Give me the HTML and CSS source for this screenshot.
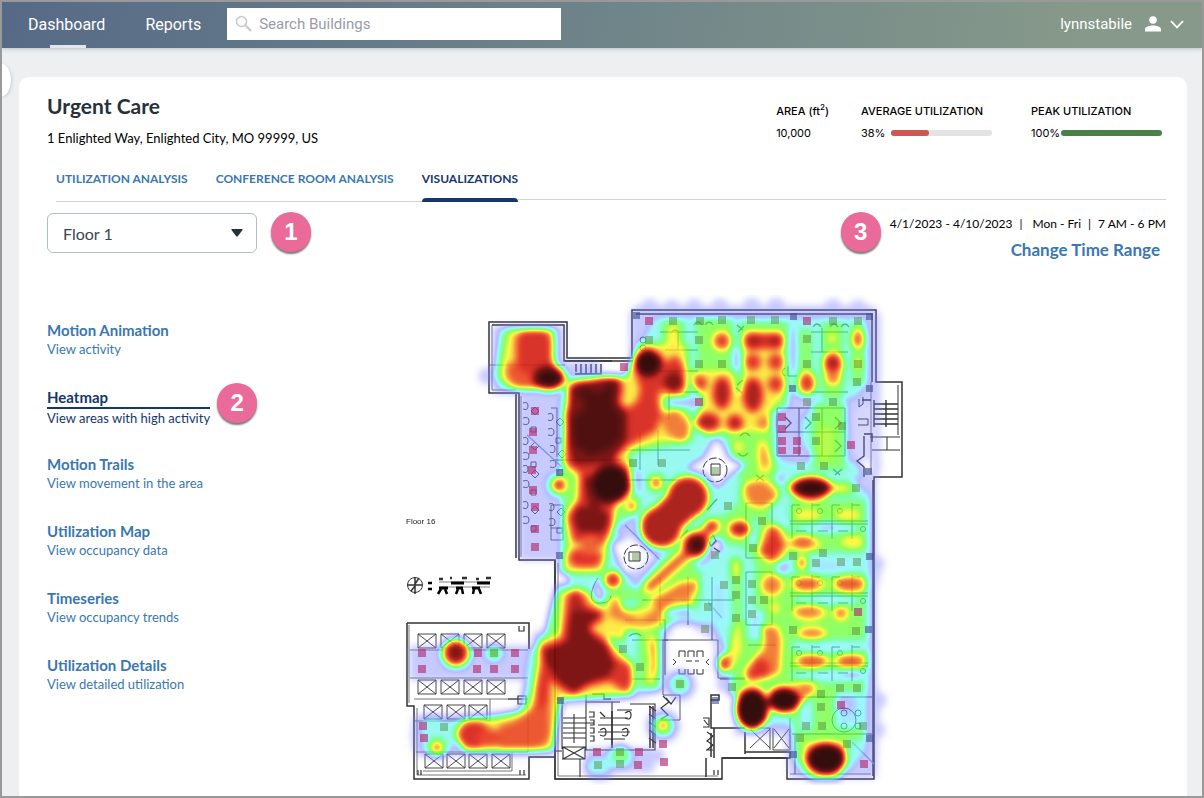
FILE: index.html
```html
<!DOCTYPE html>
<html lang="en">
<head>
<meta charset="utf-8">
<meta name="viewport" content="width=device-width, initial-scale=1">
<title>Urgent Care - Visualizations</title>
<link rel="stylesheet" href="styles.css">
</head>
<body>
<header class="topbar">
  <nav class="topnav" aria-label="Main">
    <a class="topnav-link is-active" href="#dashboard">Dashboard</a>
    <a class="topnav-link" href="#reports">Reports</a>
  </nav>
  <label class="search">
    <svg width="18" height="18" viewBox="0 0 18 18" aria-hidden="true"><circle cx="6.5" cy="6.5" r="5" fill="none" stroke="#c9c9cb" stroke-width="1.6"/><path d="M10.3 10.3 16 16" stroke="#c9c9cb" stroke-width="2"/></svg>
    <input type="search" placeholder="Search Buildings" aria-label="Search Buildings">
  </label>
  <button class="account" type="button">lynnstabile
    <svg class="account-person" width="16" height="16" viewBox="0 0 16 16" aria-hidden="true"><circle cx="8" cy="4" r="3.8" fill="#fff"/><path d="M0 15.500V13C0 10.800 4.500 9.500 8 9.500S16 10.800 16 13V15.500Z" fill="#fff"/></svg>
    <svg width="14" height="9" viewBox="0 0 14 9" aria-hidden="true"><path d="M1 1.200 7 7.400 13 1.200" fill="none" stroke="#fff" stroke-width="1.800"/></svg>
  </button>
</header>
<main class="page">
  <button class="drawer-handle" type="button" aria-label="Open menu"></button>
  <section class="card">
    <div class="card-head">
      <div>
        <h1 class="title">Urgent Care</h1>
        <p class="address">1 Enlighted Way, Enlighted City, MO 99999, US</p>
      </div>
      <dl class="stats">
        <div class="stat"><dt>AREA (ft<sup>2</sup>)</dt><dd>10,000</dd></div>
        <div class="stat"><dt>AVERAGE UTILIZATION</dt><dd><span class="percent">38%</span><span class="bar"><span class="bar-fill bar-low" style="width:38%"></span></span></dd></div>
        <div class="stat"><dt>PEAK UTILIZATION</dt><dd><span class="percent">100%</span><span class="bar"><span class="bar-fill bar-full" style="width:100%"></span></span></dd></div>
      </dl>
    </div>
    <nav class="tabs" aria-label="Building views">
      <a class="tab" href="#utilization">UTILIZATION ANALYSIS</a>
      <a class="tab" href="#conference">CONFERENCE ROOM ANALYSIS</a>
      <a class="tab is-active" href="#visualizations">VISUALIZATIONS</a>
      <span class="tabs-rest"></span>
    </nav>
    <div class="toolbar">
      <div class="floor">
        <select aria-label="Floor"><option>Floor 1</option></select>
        <svg class="floor-arrow" width="12" height="8" viewBox="0 0 12 8" aria-hidden="true"><path d="M1 0H11Q12 0 11.500 1L7 7Q6 8 5 7L.5 1Q0 0 1 0Z" fill="#263238"/></svg>
      </div>
      <span class="marker">1</span>
      <span class="marker marker-range">3</span>
      <div class="range">
        <p class="range-text"><span>4/1/2023 - 4/10/2023</span><span>|</span><span class="range-days">Mon - Fri</span><span>|</span><span>7 AM - 6 PM</span></p>
        <a class="range-link" href="#range">Change Time Range</a>
      </div>
    </div>
    <div class="content">
      <nav class="views" aria-label="Visualizations">
        <a class="view" href="#animation"><strong>Motion Animation</strong><span>View activity</span></a>
        <div class="view-row"><a class="view is-active" href="#heatmap"><strong>Heatmap</strong><span>View areas with high activity</span></a><span class="marker">2</span></div>
        <a class="view" href="#trails"><strong>Motion Trails</strong><span>View movement in the area</span></a>
        <a class="view" href="#map"><strong>Utilization Map</strong><span>View occupancy data</span></a>
        <a class="view" href="#timeseries"><strong>Timeseries</strong><span>View occupancy trends</span></a>
        <a class="view" href="#details"><strong>Utilization Details</strong><span>View detailed utilization</span></a>
      </nav>
      <svg class="map" viewBox="395 295 515 490" role="img" aria-label="Floor heatmap">
        <defs>
          <filter id="heat" filterUnits="userSpaceOnUse" x="395" y="290" width="515" height="500" color-interpolation-filters="sRGB">
            <feGaussianBlur stdDeviation="3.600" result="b"/>
            <feComponentTransfer in="b" result="c">
              <feFuncR type="table" tableValues=".5 .5 .45 .38 .3 .45 1 .95 .9 .5 .18"/>
              <feFuncG type="table" tableValues=".5 .5 .5 .95 1 1 .96 .5 .16 .04 .02"/>
              <feFuncB type="table" tableValues="1 1 1 1 .55 .12 .12 .14 .1 .04 .02"/>
            </feComponentTransfer>
            <feColorMatrix in="b" type="matrix" values="0 0 0 0 0  0 0 0 0 0  0 0 0 0 0  1 0 0 0 0"/>
            <feComponentTransfer result="a"><feFuncA type="table" tableValues="0 .3 .52 .62 .72 .76 .82 .88 .92 .95 .97"/></feComponentTransfer>
            <feComposite in="c" in2="a" operator="in"/>
          </filter>
          <filter id="soft" x="-5%" y="-5%" width="110%" height="110%"><feGaussianBlur stdDeviation=".6"/></filter>
          <g id="lift"><path d="M0 0H18V14H0ZM0 0 18 14M18 0 0 14" fill="none" stroke="#333" stroke-width=".9"/></g>
          <g id="desks" fill="none" stroke="#333" stroke-width="1"><path d="M0 18H78M0 21H78M2 2V36M22 0V36M42 2V36M62 0V36M2 2H10M22 2H30M42 2H50M62 2H70M6 28H16M28 28H38M48 28H58"/><circle cx="9" cy="8" r="2.500"/><circle cx="30" cy="8" r="2.500"/><circle cx="50" cy="8" r="2.500"/><circle cx="73" cy="26" r="2.500"/></g>
          <g id="chairs" fill="none" stroke="#333" stroke-width=".9"><path d="M0 0q5-2 5 3t-5 3M8 8l4-4 4 4-4 4ZM0 15q6-2 6 3t-6 3M8 24h5v5H8Z"/></g>
        </defs>

        <g filter="url(#soft)" fill="none" stroke="#333">
          <g stroke="#333" stroke-width="1.500">
            <path d="M489 322H567V358H632V310H876V382H902V477H874V779H787V758H722V779H555V560H519V393H489Z"/>
            <path d="M492 325H564V361H633M636 314H872V382M873 480V776M516 394V558M407 623H529V649M407 623V706H414V779H529V757H554M555 560V700"/>
          </g>
          <g stroke-width=".8" stroke="#555">
            <path d="M492 325V390H516M521 396V557M871 382V474M409 625V703M417 708V775H526M558 563V776H718M790 774H871M489 365H565M410 650H528M410 678H528M414 699H528M414 721H490V699M416 752H528V706M423 771H512V752"/>
          </g>
          <path stroke-width="1.400" d="M565 361H612M576 364V372M581 364V373M586 364V374M591 364V374M596 364V374M601 364V373M575 374H602M874 404H898M874 409H898M874 414H898M874 419H898M874 424H898M886 400V427M874 400V427M862 400H871M864 434H872V442M864 436V456L857 461 864 467V477"/>
          <path stroke-width="1" d="M870 437H900M887 437V450M872 450H900M898 385V435M859 399v8l4-3v-7M858 419h10v6h-10"/>
          <g stroke-width="1"><circle cx="715" cy="470" r="12" stroke-dasharray="8 2"/><circle cx="636" cy="557" r="12" stroke-dasharray="8 2"/><path d="M711 464h9v11h-9ZM629 552h11v9h-11ZM598 578C589 592 588 605 602 603Q610 603 611 596"/></g>
          <path d="M722 779H555V699H562V749M555 751H562M586 695V750H655V704H630M586 702H620M612 702V745M617 710H632M600 718H628M598 725H630M598 732H630M604 739H625M563 718H586M563 723H594M563 728H586M563 733H586M563 738H586M574 714V743M563 747H585V759H563ZM563 747 585 759M585 747 563 759M562 759H580V777" stroke-width="1.100"/>
          <path d="M612 711V748M650 706V748M653 706V748M592 694H604V699H611M706 758V777M711 697V728H745M714 728V758M711 733V757M745 732V754M745 752H790V758H722M711 695H719V700H711Z" stroke-width="1.500"/>
          <path d="M663 640H718V678H745M663 640V695H680V720H660" stroke-width=".8"/>
          <path d="M750 729L770 748M770 729L750 748M774 729L789 748M789 729L774 748M749 728H770V750M773 728V750H790V718" stroke-width=".9"/>
          <path d="M679 657v-6h6v6M688 657v-6h6v6M697 657v-6h6v6M679 669v5h6v-5M688 669v5h6v-5M697 669v5h6v-5M686 661h6M695 661h4M673 659l3 3-3 3M709 659l-3 3 3 3" stroke-width="1"/>
          <path d="M703 718h6v9h-6M704 720l4 5M663 696l6 6-8 6 7 7-7 4M707 732l6 4-6 5 6 4-6 5M706 750h7M666 698l5 6 5-7" stroke-width="1.200"/>
          <path d="M589 712h5v5h-5M590 720h4v5h-4M590 728h4v5h-4M590 736h4v5h-4M600 712l5 5M600 730q6-4 6 2t-6 3M625 713q6-4 6 2t-6 3M622 730q6-4 6 2t-6 3M649 706l7 5M649 714l7 5M649 722l7 5M649 730l7 5M649 738l7 5" stroke-width="1.200"/>
          <use href="#lift" x="418" y="634"/><use href="#lift" x="441" y="634"/><use href="#lift" x="464" y="634"/><use href="#lift" x="487" y="634"/>
          <use href="#lift" x="418" y="680"/><use href="#lift" x="441" y="680"/><use href="#lift" x="464" y="680"/><use href="#lift" x="487" y="680"/>
          <use href="#lift" x="424" y="705"/><use href="#lift" x="447" y="705"/><use href="#lift" x="469" y="705"/>
          <use href="#lift" x="425" y="754"/><use href="#lift" x="447" y="754"/><use href="#lift" x="469" y="754"/><use href="#lift" x="492" y="754"/>
          <path d="M508 699H522M518 696h8v8h-8ZM519 626v5h5v-5M418 770v5M421 770v5M520 770v5M524 770v5M714 770v5M718 770v5" stroke-width="1.200"/>
          <use href="#chairs" x="523" y="403"/><use href="#chairs" x="523" y="438"/><use href="#chairs" x="523" y="466"/><use href="#chairs" x="523" y="502"/><use href="#chairs" x="548" y="414"/><use href="#chairs" x="550" y="446"/><use href="#chairs" x="549" y="504"/>
          <path d="M551 408H557V457M551 505H563V540H551ZM551 528H563" stroke-width=".8"/>
          <g stroke-width="1">
            <path d="M660 332H698M665 350H698M659 371H698M659 392H698M669 392V420M678 333V350M811 332H848M811 352H848M811 392H848M822 328V352M788 366V376H797M777 408H845V456H777ZM777 432H845M822 408V456M799 408V456M623 450H690M640 433V470M658 430V465M623 480H680M555 460H622M746 503H772V558H746ZM746 572H772V625H746ZM660 577V625M688 577V625M712 577V640M642 600H735M625 620H665V675M632 640H668M632 679H660M720 679H745M748 645H776M792 697H872M792 734H872M795 734V774"/>
            <path d="M629 636q8-5 12 0M671 333q4-6 8 0M813 327q4-6 8 0M830 327q4-6 8 0M841 327q4-6 8 0M694 325q4-6 8 0M705 325q4-6 8 0M785 417l6 6-6 6M805 417l6 6-6 6M835 417l6 6-6 6M835 440l6 6-6 6M680 538l8-8M707 510l10-11M833 469l7 6M842 469l-7 6" stroke-width="1.300"/>
            <path d="M740 436q5-6 10 0M738 453q5 6 10 0M756 475l8 6M764 475l-8 6M737 325l6 5M744 326l-6 6M737 385l6-5M736 388l6 5M785 368q-6 4 0 8M708 540l5-5 3 6-5 5ZM714 548l6 4" stroke-width="1.300"/>
            <circle cx="844" cy="720" r="12"/><circle cx="844" cy="713" r="3"/><circle cx="858" cy="713" r="3"/><circle cx="844" cy="726" r="3"/><circle cx="858" cy="726" r="3"/><circle cx="643" cy="340" r="3"/><circle cx="643" cy="348" r="3"/>
          </g>
          <use href="#desks" x="790" y="503"/><use href="#desks" x="790" y="575"/><use href="#desks" x="790" y="645"/>
          <path d="M625 525 660 560M708 602l14 16M852 742l22 22M527 435l35 32" stroke="#7d9be8" stroke-width="1.200"/>
          <circle cx="415" cy="585" r="7.500"/><path d="M407 585H422M415 577V594M415 584l4-6M415 586l-4 5" stroke-width="1.500"/>
          <path d="M439 579h4M450 578h2M462 578h5M476 579h3M486 578h5" stroke-width="2.500"/>
          <path d="M439 582H490M439 587H490" stroke-width=".6"/><path d="M451 583H464M477 583H490M439 588H448M456 588H463M472 588H480" stroke="#000" stroke-width="3"/>
          <path d="M438 594l3-5M447 594l-2-5M456 594l2-5M463 594l-1-5M473 594l1-5M481 594l-2-5M428 583h4M428 589h4" stroke="#000" stroke-width="2.500"/>
          <text x="406" y="524" class="plan-text">Floor 16</text>
        </g>

        <g filter="url(#heat)" stroke-linejoin="round" stroke-linecap="round">
          <rect x="390" y="285" width="525" height="510" fill="#000"/>
          <g fill="#272727">
            <path d="M493 326H564V362H600V375H630V312L636 306H872L880 315V470L876 480V560L880 575 876 590V680L880 700 876 778H790L785 735H735L735 695 718 690 714 640 690 625 675 625 666 640V690L640 698 556 706V748Q550 758 480 756L416 756Q408 740 414 715L530 712V680H410V646H535L556 634V592L558 560H519V394H493Z"/>
            <circle cx="487" cy="376" r="8"/><circle cx="542" cy="640" r="10"/><circle cx="650" cy="308" r="9"/><circle cx="672" cy="308" r="8"/><circle cx="694" cy="308" r="9"/><circle cx="720" cy="307" r="8"/><circle cx="752" cy="307" r="9"/><circle cx="776" cy="307" r="9"/><circle cx="833" cy="308" r="9"/><circle cx="858" cy="308" r="8"/><circle cx="878" cy="700" r="8"/><circle cx="878" cy="730" r="7"/><circle cx="876" cy="564" r="8"/><circle cx="680" cy="685" r="16"/><circle cx="663" cy="726" r="17"/><ellipse cx="600" cy="768" rx="16" ry="13"/><path d="M586 748H654V772H586ZM654 750h10v12h-10z"/>
          </g>
          <g fill="#525252">
            <path d="M500 329H556V388H498L494 372ZM560 402L566 378H625L630 370 640 345 655 318H865L868 350V382L855 398H805L790 392 775 405 772 455 790 462H862V475L850 480 870 495V680L866 700V750L850 770H800L795 725H745L732 690 728 650 720 638 714 625 690 622 668 620 658 650V690L600 688 555 694 548 745H465L425 740 422 724 470 718 520 710 530 650 555 635V592L562 560V460Z"/>
            <circle cx="680" cy="684" r="11"/><circle cx="663" cy="726" r="12"/><circle cx="456" cy="653" r="16"/><circle cx="494" cy="653" r="9"/><circle cx="559" cy="485" r="13"/><ellipse cx="598" cy="766" rx="13" ry="9"/><ellipse cx="620" cy="757" rx="13" ry="12"/><ellipse cx="437" cy="745" rx="15" ry="13"/><circle cx="823" cy="432" r="24"/><circle cx="432" cy="727" r="12"/>
          </g>
          <g fill="#7a7a7a">
            <path d="M504 330H555V388H506L496 376ZM662 320H684V395H662ZM695 318H732V400H700ZM740 322H788V412H738ZM798 330H812V395H798ZM822 322H843V400H822ZM852 322H864V385H852ZM812 402H846V470H812ZM725 430H775V465L790 495H856V482H745V500H770V560H778V575H792V695H730L735 640 730 560H742V620H755V560L740 545H700L690 560 700 570V605L660 630V690H638V600L600 600 650 575 690 530 730 512 745 495ZM790 500H866V552H790ZM790 574H866V640H790ZM785 650H868V672H785ZM790 680H864V740H850L840 780H810L795 760Z"/>
            <path d="M568 378H625L640 345H690V440L672 445 655 448 630 452 622 480 640 500 635 515 618 520 606 565H562V470ZM545 635 555 592H600V690L560 695 550 748H462L458 725 520 712 535 685Z"/>
            <circle cx="680" cy="684" r="6"/><circle cx="494" cy="653" r="7"/><circle cx="620" cy="754" r="8"/><circle cx="656" cy="483" r="9"/><circle cx="559" cy="485" r="9"/><circle cx="663" cy="726" r="8"/><circle cx="456" cy="653" r="15"/>
          </g>
          <g fill="#474747"><path d="M800 692H812V730H800ZM836 692H862V728H836ZM776 520H790V540H776ZM712 582H726V622H712ZM748 520H758V545H748ZM748 610H764V640H748Z"/><ellipse cx="828" cy="600" rx="34" ry="5"/><ellipse cx="828" cy="528" rx="34" ry="5"/><ellipse cx="828" cy="567" rx="22" ry="8"/><ellipse cx="830" cy="648" rx="36" ry="5"/><ellipse cx="830" cy="676" rx="34" ry="6"/></g>
          <g fill="#2c2c2c"><ellipse cx="793" cy="350" rx="4" ry="24"/><ellipse cx="737" cy="362" rx="4" ry="16"/><path d="M668 398H706V407H668ZM777 408H801V454H777Z"/><ellipse cx="782" cy="567" rx="7" ry="6"/><circle cx="780" cy="478" r="5"/><ellipse cx="628" cy="400" rx="4" ry="10"/><path d="M598 631L620 628 636 634 630 641 606 637ZM664 607H690V616H664Z"/><ellipse cx="636" cy="482" rx="5" ry="12"/><ellipse cx="845" cy="705" rx="9" ry="7"/><ellipse cx="828" cy="527" rx="9" ry="3"/><ellipse cx="853" cy="674" rx="10" ry="4"/><path d="M628 520l6-6 8 14 22 24-22 30-6 10-8-16 12-22-18-18-12-4Z"/></g>
          <g fill="#000"><path d="M715 438L723 445 728 458 746 465 730 474 717 488 706 474 686 468 704 458ZM611 544L630 536 654 557 640 570 624 574ZM716 536L724 545 714 554 696 568 708 550ZM598 580L603 602 592 596ZM557 572H568V584H557ZM858 461l14-5v18l-12-6Z"/><path d="M877 402H864L854 412V452L862 460H877Z" fill="#1c1c1c"/></g>
          <g fill="#9c9c9c"><path d="M510 330H552V388H512L502 376ZM575 382H624L640 345H684V396H658V420L676 408 690 420V440H660L628 450 632 490 612 510 606 540 602 572H564V560L572 545 566 515 578 500 578 475 562 462ZM540 640 562 636V592H590L600 612 612 596 622 612 660 606 664 622 644 630H625V640L600 634 632 664V694L560 698 552 750H465L456 733 465 720 500 720 532 710ZM690 372H735V395H744V333H782V395L770 410 768 430H738L708 434 695 425 704 400Z" stroke="#9c9c9c" stroke-width="3"/>
            <ellipse cx="673" cy="337" rx="6" ry="14"/><circle cx="722" cy="341" r="11"/><circle cx="832" cy="338" r="5"/><circle cx="858" cy="363" r="6"/><ellipse cx="858" cy="339" rx="8" ry="11"/><circle cx="738" cy="447" r="6"/><path d="M758 440h8l8 26-6 8h-10Z"/><path d="M816 426H834V452L826 466 816 452Z" fill="#888"/><ellipse cx="840" cy="488" rx="10" ry="5"/><ellipse cx="807" cy="515" rx="14" ry="6"/><ellipse cx="848" cy="515" rx="13" ry="6"/><ellipse cx="853" cy="542" rx="12" ry="7"/><ellipse cx="736" cy="568" rx="5" ry="11"/><path d="M735 618L740 630 742 650 730 672 722 674 716 664 728 650Z"/><circle cx="663" cy="726" r="6"/><circle cx="437" cy="747" r="8"/><ellipse cx="672" cy="600" rx="22" ry="9"/><path d="M645 636H658L660 670 652 686 646 680 650 660Z"/><ellipse cx="808" cy="584" rx="18" ry="9"/><ellipse cx="850" cy="584" rx="18" ry="9"/><ellipse cx="810" cy="612" rx="18" ry="9"/><circle cx="841" cy="613" r="8"/><ellipse cx="812" cy="634" rx="16" ry="7"/><ellipse cx="812" cy="661" rx="18" ry="8"/><ellipse cx="850" cy="661" rx="17" ry="8"/><circle cx="775" cy="608" r="6"/><ellipse cx="774" cy="544" rx="16" ry="20"/><ellipse cx="804" cy="545" rx="18" ry="8"/><ellipse cx="772" cy="585" rx="12" ry="12"/><path d="M648 588L695 548 712 525" fill="none" stroke="#9c9c9c" stroke-width="13"/><ellipse cx="833" cy="368" rx="11" ry="17"/><ellipse cx="807" cy="383" rx="10" ry="13"/><ellipse cx="760" cy="493" rx="20" ry="14"/><path d="M790 680H815L818 690 800 706ZM804 742H846V760H804Z"/></g>
          <g fill="#b8b8b8"><path d="M660 415L676 411 690 428 682 442 668 432Z" stroke="#b8b8b8" stroke-width="3"/><circle cx="764" cy="423" r="7"/><path d="M758 446h6l6 16-6 6-5-6Z" fill="#b0b0b0"/><path d="M746 486 762 483 776 496 764 506 752 504Z" stroke="#b8b8b8" stroke-width="4"/><circle cx="632" cy="506" r="6"/><circle cx="656" cy="483" r="7"/><path d="M617 594L625 612 640 620 658 608 650 604 664 592 680 582 698 580 698 592 690 596 692 604 676 600 656 624 632 624 608 616Z"/><circle cx="663" cy="725" r="5"/><circle cx="437" cy="748" r="5"/><circle cx="833" cy="378" r="7"/><ellipse cx="802" cy="563" rx="6" ry="8"/><ellipse cx="772" cy="585" rx="9" ry="9"/><ellipse cx="808" cy="612" rx="13" ry="6"/><circle cx="841" cy="613" r="6"/><ellipse cx="812" cy="633" rx="12" ry="5"/><path d="M763 628H776L780 640 778 672 750 680 746 672 766 648Z" stroke="#b8b8b8" stroke-width="4"/><path d="M798 684H812L814 690 802 702Z"/><path d="M650 642L656 645 656 670 652 676Z"/></g>
          <g fill="#c3c3c3"><path d="M508 364H556V388H520L508 378ZM500 726Q535 720 538 690H549L549 735Q546 748 530 748H500Z" stroke="#c3c3c3" stroke-width="2"/><ellipse cx="807" cy="584" rx="12" ry="6"/><ellipse cx="850" cy="584" rx="14" ry="7"/><ellipse cx="803" cy="542" rx="11" ry="6"/><ellipse cx="812" cy="661" rx="14" ry="6"/><ellipse cx="851" cy="661" rx="13" ry="6"/><ellipse cx="858" cy="339" rx="5" ry="8"/><path d="M651 586L690 550 712 526" fill="none" stroke="#c6c6c6" stroke-width="8"/></g>
          <g fill="#d0d0d0">
            <rect x="516" y="329" width="36" height="45" rx="13"/>
            <path d="M569 387 577 382 607 377 620 378 622 390 618 403 627 410 638 403 642 390 637 373 636 357 648 349 661 357 665 365 675 357 683 367 684 387 675 393 662 388 657 393 660 413 655 430 627 445 613 457 628 470 630 490 613 500 611 530 600 545 574 540 569 517 580 500 582 473 568 463 566 413 570 403Z" stroke="#d0d0d0" stroke-width="3"/>
            <path d="M569 594 577 589 583 597 587 607 602 612 601 620 586 628 605 640 613 657 630 667 632 683 625 690 610 680 587 685 573 694 560 687 550 677 547 700 540 708 537 690 543 663 541 648 562 640 566 617Z" stroke="#d0d0d0" stroke-width="3"/>
            <circle cx="559" cy="485" r="7"/><rect x="569" y="549" width="33" height="18" rx="9"/><path d="M582 535h16v20h-16z" fill="#c0c0c0"/><ellipse cx="474" cy="735" rx="16" ry="14"/><ellipse cx="490" cy="738" rx="12" ry="9" fill="#c8c8c8"/><circle cx="722" cy="341" r="7"/><circle cx="753" cy="362" r="8"/><circle cx="776" cy="362" r="8"/><path d="M752 333H777V349H752Z"/><circle cx="776" cy="384" r="8"/><circle cx="700" cy="383" r="7"/><ellipse cx="807" cy="383" rx="7" ry="9"/><circle cx="712" cy="526" r="7"/><ellipse cx="724" cy="663" rx="6" ry="8"/><path d="M758 658L768 664 768 676 750 679 750 672Z" stroke="#d0d0d0" stroke-width="3"/><path d="M773 527L782 545 773 558 762 552 768 540Z" stroke="#d0d0d0" stroke-width="5"/><circle cx="613" cy="580" r="9"/><circle cx="456" cy="653" r="13"/>
          </g>
          <g fill="#dcdcdc"><circle cx="753" cy="341" r="9"/><circle cx="776" cy="341" r="8"/><ellipse cx="753" cy="395" rx="10" ry="17"/><ellipse cx="722" cy="393" rx="9" ry="16"/><ellipse cx="708" cy="422" rx="12" ry="9"/><circle cx="735" cy="423" r="8"/><circle cx="833" cy="363" r="9"/><circle cx="688" cy="497" r="21"/><circle cx="661" cy="527" r="21"/><path d="M668 494 654 508 680 530 696 516Z"/><ellipse cx="740" cy="529" rx="11" ry="8"/><path d="M571 598 577 594 584 608 598 614 584 630 568 634Z"/></g>
          <g fill="#e8e8e8"><path d="M572 612H592L600 614 588 626 592 636 606 646 614 664 608 676 594 680 574 692 560 682 546 662 545 650 568 642ZM576 508H600L609 518 603 532H580L574 520ZM584 478H612V500L590 508ZM569 388L582 384 605 380 618 380 618 405 626 412V440L612 462 574 464 568 440Z" stroke="#e8e8e8" stroke-width="2"/><circle cx="674" cy="382" r="10"/><circle cx="696" cy="545" r="13"/><ellipse cx="811" cy="488" rx="21" ry="12"/><ellipse cx="549" cy="378" rx="17" ry="13"/><circle cx="456" cy="653" r="8"/></g>
          <g fill="#fff"><path d="M586 405L575 392 582 386 600 392 608 383 616 384 613 404 623 416 622 438 608 450 590 456 574 446 571 420Z" fill="#f6f6f6"/><circle cx="648" cy="363" r="13"/><circle cx="611" cy="484" r="19"/><ellipse cx="752" cy="709" rx="17" ry="21"/><ellipse cx="784" cy="700" rx="16" ry="13"/><ellipse cx="826" cy="759" rx="20" ry="16"/><circle cx="697" cy="545" r="6"/><ellipse cx="812" cy="488" rx="15" ry="7"/><ellipse cx="549" cy="378" rx="12" ry="8"/></g>
        </g>

        <g filter="url(#soft)">
          <path class="sensor-quiet" d="M645 317h8v8h-8ZM620 363h8v8h-8ZM531 407h8v8h-8ZM529 428h8v8h-8ZM529 446h8v8h-8ZM528 466h8v8h-8ZM529 486h8v8h-8ZM531 503h8v8h-8ZM531 525h8v8h-8ZM531 543h8v8h-8ZM803 317h8v8h-8ZM695 398h8v8h-8ZM778 413h8v8h-8ZM778 425h8v8h-8ZM778 437h8v8h-8ZM778 447h8v7h-8ZM793 437h8v8h-8ZM793 447h8v7h-8ZM847 441h8v8h-8ZM418 649h8v8h-8ZM418 665h8v8h-8ZM474 649h8v8h-8ZM473 665h8v8h-8ZM490 665h8v8h-8ZM511 649h8v8h-8ZM511 665h8v8h-8ZM419 722h8v8h-8ZM420 734h8v8h-8ZM593 748h8v8h-8ZM635 748h8v8h-8ZM634 761h8v8h-8ZM659 740h8v8h-8ZM660 758h8v8h-8ZM854 608h8v8h-8ZM837 701h8v8h-8ZM860 760h8v8h-8Z"/>
          <path class="sensor-busy" d="M669 317h8v8h-8ZM696 317h8v8h-8ZM718 316h8v8h-8ZM747 316h8v8h-8ZM771 316h8v8h-8ZM829 317h8v8h-8ZM854 317h8v8h-8ZM645 336h8v8h-8ZM695 336h8v8h-8ZM803 335h8v8h-8ZM803 360h8v8h-8ZM854 360h8v8h-8ZM718 360h8v8h-8ZM695 360h8v8h-8ZM803 398h8v8h-8ZM829 398h8v8h-8ZM853 378h8v8h-8ZM812 413h8v8h-8ZM812 437h8v8h-8ZM838 422h8v8h-8ZM629 459h8v8h-8ZM658 459h8v8h-8ZM724 502h8v8h-8ZM797 462h8v8h-8ZM820 462h8v8h-8ZM852 484h8v8h-8ZM749 544h8v8h-8ZM758 517h8v8h-8ZM789 552h8v8h-8ZM812 559h8v8h-8ZM819 549h8v8h-8ZM837 558h8v8h-8ZM853 558h8v8h-8ZM720 581h8v8h-8ZM732 576h8v8h-8ZM748 580h8v8h-8ZM748 596h8v8h-8ZM760 596h8v8h-8ZM732 591h8v8h-8ZM704 603h8v8h-8ZM748 610h8v8h-8ZM732 614h8v8h-8ZM619 645h8v8h-8ZM636 663h8v8h-8ZM701 625h8v8h-8ZM676 680h8v8h-8ZM728 683h8v8h-8ZM490 649h8v8h-8ZM440 723h8v8h-8ZM616 748h8v8h-8ZM616 760h8v8h-8ZM594 761h8v8h-8ZM836 684h8v8h-8ZM853 684h8v8h-8ZM817 690h8v8h-8ZM817 703h8v8h-8ZM802 722h8v8h-8ZM818 722h8v8h-8ZM859 722h8v8h-8ZM843 740h8v8h-8ZM796 734h8v8h-8ZM852 627h8v8h-8ZM789 626h8v8h-8ZM711 467h8v8h-8ZM632 553h8v8h-8ZM711 551h8v8h-8Z"/>
          <path class="sensor-edge" d="M633 312h7v7h-7ZM790 313h7v7h-7ZM866 313h7v7h-7ZM866 385h7v7h-7ZM789 385h7v7h-7ZM865 468h7v7h-7ZM866 553h7v7h-7ZM556 469h7v7h-7ZM556 552h7v7h-7ZM557 697h7v7h-7ZM865 626h7v7h-7ZM866 735h7v7h-7ZM790 751h7v7h-7ZM712 697h7v7h-7Z"/>
        </g>
      </svg>
    </div>
  </section>
</main>
</body>
</html>
```
FILE: styles.css
```css
* { box-sizing: border-box; }
body {
  margin: 0;
  min-height: 100vh;
  display: flex;
  flex-direction: column;
  border: 2px solid #999;
  background: #edeff1;
  font-family: Lato, sans-serif;
  color: #000;
}
h1, p, dl, dd { margin: 0; }
a { text-decoration: none; }

.topbar {
  display: flex;
  align-items: center;
  height: 46px;
  padding: 0 18px 2px 26px;
  background: linear-gradient(100deg, #566a87, #6f8489 50%, #86998a 90%);
  box-shadow: 0 1px 4px #b9c1cc;
  font-family: Roboto, sans-serif;
}
.topnav { display: flex; align-self: stretch; gap: 40px; }
.topnav-link {
  position: relative;
  display: flex;
  align-items: center;
  color: #fff;
  font-size: 16px;
}
.topnav-link.is-active::after {
  content: "";
  position: absolute;
  left: 22px;
  bottom: -2px;
  width: 36px;
  height: 3px;
  background: #e3e6ea;
}
.search {
  display: flex;
  align-items: center;
  gap: 4px;
  width: 334px;
  height: 32px;
  margin-left: 26px;
  padding: 0 8px;
  background: #fff;
}
.search input {
  flex: 1;
  min-width: 0;
  border: 0;
  outline: 0;
  background: none;
  font: 15px Roboto, sans-serif;
}
.search input::placeholder { color: #9a9ca5; }
.account {
  display: flex;
  align-items: center;
  margin-left: auto;
  padding: 0;
  border: 0;
  background: none;
  color: #fff;
  font: 15px Roboto, sans-serif;
}
.account-person { margin: 0 9px 0 13px; }

.page {
  position: relative;
  flex: 1;
  display: flex;
  padding: 29px 15px 0 17px;
}
.drawer-handle {
  position: absolute;
  left: 0;
  top: 16px;
  width: 9px;
  height: 32px;
  padding: 0;
  border: 0;
  border-radius: 0 9px 9px 0 / 0 16px 16px 0;
  background: #fff;
  box-shadow: 1px 1px 3px #c3ccd4;
}
.card {
  flex: 1;
  min-width: 0;
  padding: 17px 21px 0 28px;
  border-radius: 10px 10px 0 0;
  background: #fff;
}
.card-head { display: flex; justify-content: space-between; }
.title { color: #263238; font-size: 21px; line-height: 24px; font-weight: 700; }
.address { margin-top: 12px; font-size: 13px; line-height: 16px; }
.stats {
  display: flex;
  gap: 32px;
  padding: 9px 4px 0 0;
  font: 11px/16px Inter, sans-serif;
}
.stat dt { font-weight: 500; }
.stat sup { font-size: 8px; line-height: 0; }
.stat dd { display: flex; align-items: center; margin-top: 6px; }
.stat:nth-child(2) { margin-right: 7px; }
.percent { width: 30px; }
.bar { width: 101px; height: 6px; border-radius: 3px; background: #e3e3e3; }
.bar-fill { display: block; height: 100%; border-radius: 3px; }
.bar-low { background: #cd584f; }
.bar-full { background: #4a8049; }

.tabs { display: flex; align-items: flex-end; margin: 24px 0 0 9px; }
.tab {
  padding: 0 28px 13px 0;
  border-bottom: 1px solid #d0d4d6;
  color: #3a77b0;
  font-size: 12px;
  line-height: 18px;
  font-weight: 700;
}
.tab.is-active {
  position: relative;
  padding-right: 0;
  color: #16376b;
}
.tab.is-active::after {
  content: "";
  position: absolute;
  left: 0;
  right: 0;
  bottom: -1px;
  height: 4px;
  border-radius: 4px 4px 0 0;
  background: #16376b;
}
.tabs-rest { flex: 1; margin-bottom: 2px; border-bottom: 1px solid #d0d4d6; }

.toolbar { display: flex; align-items: flex-start; margin-top: 11px; }
.floor { position: relative; width: 210px; }
.floor select {
  appearance: none;
  width: 100%;
  height: 40px;
  padding: 0 15px;
  border: 1px solid #b0bec5;
  border-radius: 6px;
  background: #fff;
  color: #37474f;
  font: 16px Lato, sans-serif;
}
.floor-arrow { position: absolute; right: 14px; top: 16px; pointer-events: none; }
.marker {
  display: grid;
  place-items: center;
  flex: none;
  width: 40px;
  height: 40px;
  border-radius: 50%;
  background: #ea6b9a;
  box-shadow: 0 2px 2px #777;
  color: #fff;
  font: 700 24px "Liberation Sans", sans-serif;
}
.toolbar .marker { margin: -1px 0 0 14px; }
.toolbar .marker-range { margin-left: auto; }
.range { display: grid; justify-items: end; margin-left: 9px; padding-top: 3px; }
.range-text { display: flex; gap: 7px; font-size: 12px; line-height: 16px; }
.range-days { margin-left: 3px; }
.range-link { margin: 8px 6px 0 0; color: #3a77b0; font-size: 17px; line-height: 20px; font-weight: 700; }

.content { display: flex; align-items: flex-start; padding-top: 35px; }
.views { display: flex; flex-direction: column; width: 348px; padding-top: 25px; }
.view, .view-row { height: 67px; }
.view { display: flex; flex-direction: column; align-items: flex-start; color: #3a77b0; }
.view strong { font-size: 15px; line-height: 20px; }
.view span { font-size: 13px; line-height: 18px; }
.view-row { display: flex; gap: 7px; }
.view-row .marker { margin-top: -4px; }
.view.is-active { color: #16376b; }
.view.is-active span { border-top: 2px solid #16376b; }
.map { flex: 0 1 515px; min-width: 0; }
.plan-text { fill: #222; stroke: none; font: 8px "Liberation Sans", sans-serif; }
.sensor-quiet { fill: #b03070; opacity: .65; }
.sensor-busy { fill: #4f7a30; opacity: .42; }
.sensor-edge { fill: #3a5090; opacity: .6; }
```
